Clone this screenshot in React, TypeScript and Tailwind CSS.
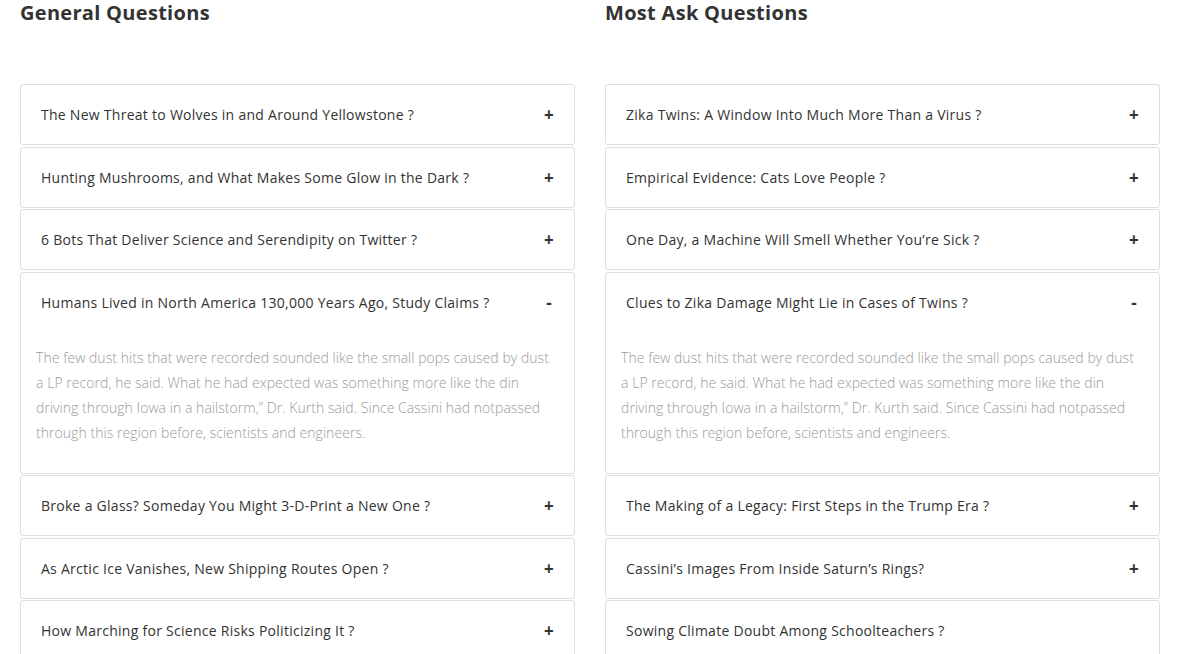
const general = [
  "The New Threat to Wolves in and Around Yellowstone ?",
  "Hunting Mushrooms, and What Makes Some Glow in the Dark ?",
  "6 Bots That Deliver Science and Serendipity on Twitter ?",
  "Humans Lived in North America 130,000 Years Ago, Study Claims ?",
  "Broke a Glass? Someday You Might 3-D-Print a New One ?",
  "As Arctic Ice Vanishes, New Shipping Routes Open ?",
  "How Marching for Science Risks Politicizing It ?",
];

const most = [
  "Zika Twins: A Window Into Much More Than a Virus ?",
  "Empirical Evidence: Cats Love People ?",
  "One Day, a Machine Will Smell Whether You’re Sick ?",
  "Clues to Zika Damage Might Lie in Cases of Twins ?",
  "The Making of a Legacy: First Steps in the Trump Era ?",
  "Cassini’s Images From Inside Saturn’s Rings?",
  "Sowing Climate Doubt Among Schoolteachers ?",
];

const answer =
  "The few dust hits that were recorded sounded like the small pops caused by dust a LP record, he said. What he had expected was something more like the din driving through Iowa in a hailstorm,” Dr. Kurth said. Since Cassini had notpassed through this region before, scientists and engineers.";

function Item({ q, open, noIcon }: { q: string; open?: boolean; noIcon?: boolean }) {
  return (
    <div className="rounded-[3px] border border-[#dedede] bg-white">
      <div className="flex h-[59px] items-center justify-between pl-5 pr-5 text-[14px] tracking-[0.27px] text-[#333]">
        <span>{q}</span>
        {!noIcon && (
          <span className="w-[10px] text-center text-[17px] font-bold leading-none">{open ? "-" : "+"}</span>
        )}
      </div>
      {open && (
        <div className="pl-[15px] pr-[20px] pt-[13px] pb-[28px] text-[14px] font-light leading-[25px] tracking-[0.05px] text-[#9a9a9a]">
          {answer}
        </div>
      )}
    </div>
  );
}

function Column({ title, items, lastNoIcon }: { title: string; items: string[]; lastNoIcon?: boolean }) {
  return (
    <div className="flex-1">
      <h2 className="text-[20px] font-bold leading-[26px] tracking-[0.3px] text-[#333]">{title}</h2>
      <div className="mt-[58px] flex flex-col gap-[1.5px]">
        {items.map((q, i) => (
          <Item key={q} q={q} open={i === 3} noIcon={lastNoIcon && i === items.length - 1} />
        ))}
      </div>
    </div>
  );
}

export default function App() {
  return (
    <div className="h-[654px] overflow-hidden bg-white font-['Open_Sans',sans-serif]">
      <div className="flex gap-[30px] pl-5 pr-[23px]">
        <Column title="General Questions" items={general} />
        <Column title="Most Ask Questions" items={most} lastNoIcon />
      </div>
    </div>
  );
}
